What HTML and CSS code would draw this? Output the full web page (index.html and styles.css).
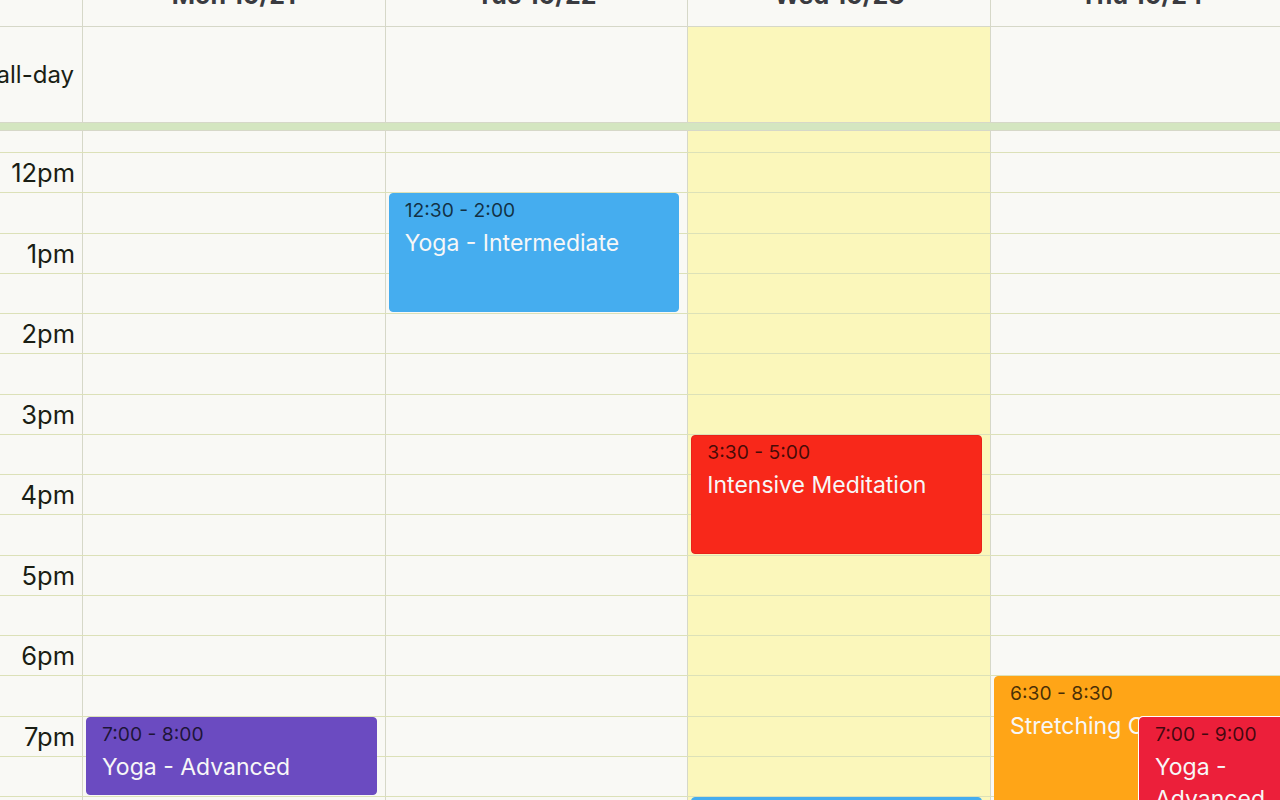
FILE: index.html
```html
<!DOCTYPE html>
<html lang="en">
<head>
<meta charset="utf-8">
<title>Week</title>
<link rel="stylesheet" href="styles.css">
</head>
<body>
<div class="cal">
  <div class="head grid">
    <div class="hc axis"></div>
    <div class="hc"><span>Mon 10/21</span></div>
    <div class="hc"><span>Tue 10/22</span></div>
    <div class="hc"><span>Wed 10/23</span></div>
    <div class="hc"><span>Thu 10/24</span></div>
    <div class="hc"><span>Fri 10/25</span></div>
  </div>
  <div class="allday grid">
    <div class="ac axis"><span>all-day</span></div>
    <div class="ac"></div>
    <div class="ac"></div>
    <div class="ac today"></div>
    <div class="ac"></div>
    <div class="ac"></div>
  </div>
  <div class="divider"></div>
  <div class="body">
    <div class="bgcols grid">
      <div class="bc axis"></div>
      <div class="bc"></div>
      <div class="bc"></div>
      <div class="bc today"></div>
      <div class="bc"></div>
      <div class="bc"></div>
    </div>
    <div class="slots">
      <div class="slot first"></div>
      <div class="slot"><span class="lbl">12pm</span></div>
      <div class="slot"></div>
      <div class="slot"><span class="lbl">1pm</span></div>
      <div class="slot"></div>
      <div class="slot"><span class="lbl">2pm</span></div>
      <div class="slot"></div>
      <div class="slot"><span class="lbl">3pm</span></div>
      <div class="slot"></div>
      <div class="slot"><span class="lbl">4pm</span></div>
      <div class="slot"></div>
      <div class="slot"><span class="lbl">5pm</span></div>
      <div class="slot"></div>
      <div class="slot"><span class="lbl">6pm</span></div>
      <div class="slot"></div>
      <div class="slot"><span class="lbl">7pm</span></div>
      <div class="slot"></div>
      <div class="slot"><span class="lbl">8pm</span></div>
      <div class="slot"></div>
    </div>
    <div class="evcols grid">
      <div class="evcol axis"></div>
      <div class="evcol">
        <div class="ev purple" style="top:585.5px;height:78.5px">
          <div class="ev-time">7:00 - 8:00</div>
          <div class="ev-title">Yoga - Advanced</div>
        </div>
      </div>
      <div class="evcol">
        <div class="ev blue" style="top:62.25px;height:118.75px">
          <div class="ev-time">12:30 - 2:00</div>
          <div class="ev-title">Yoga - Intermediate</div>
        </div>
      </div>
      <div class="evcol">
        <div class="ev red" style="top:303.75px;height:118.75px">
          <div class="ev-time">3:30 - 5:00</div>
          <div class="ev-title">Intensive Meditation</div>
        </div>
        <div class="ev blue" style="top:666px;height:78.5px">
          <div class="ev-time">8:00 - 9:00</div>
          <div class="ev-title">Yoga - Beginner</div>
        </div>
      </div>
      <div class="evcol">
        <div class="ev orange" style="top:545.25px;height:159px">
          <div class="ev-time">6:30 - 8:30</div>
          <div class="ev-title">Stretching Class</div>
        </div>
        <div class="ev crimson half" style="top:585.5px;height:159px">
          <div class="ev-time">7:00 - 9:00</div>
          <div class="ev-title">Yoga - Advanced</div>
        </div>
      </div>
      <div class="evcol"></div>
    </div>
  </div>
</div>
</body>
</html>
```

FILE: styles.css
```css
* { box-sizing: border-box; }

html, body {
  margin: 0;
  height: 100%;
}

body {
  font-family: Inter, "Noto Sans", sans-serif;
  background: #f9f9f5;
  color: #1a1e14;
  overflow: hidden;
}

.cal {
  height: 100vh;
  display: flex;
  flex-direction: column;
  overflow: hidden;
  font-size: 22px;
}

.grid {
  display: grid;
  grid-template-columns: 83px repeat(5, 302.67px);
}

/* header */
.head { flex: none; height: 27px; }
.hc {
  height: 27px;
  border-right: 1px solid #d6d8c8;
  border-bottom: 1px solid #d6d8c8;
  display: flex;
  justify-content: center;
  align-items: flex-start;
}
.hc span {
  font-weight: 700;
  font-size: 25px;
  line-height: 25px;
  margin-top: -17px;
  color: #3a3b40;
  white-space: nowrap;
}

/* all-day */
.allday { flex: none; height: 96px; }
.ac {
  height: 96px;
  border-right: 1px solid #d6d8c8;
  border-bottom: 1px solid #d6d8c8;
}
.ac.axis {
  display: flex;
  align-items: center;
  justify-content: flex-end;
  padding-right: 8px;
  font-size: 24px;
}
.ac.axis span { white-space: nowrap; }
.today { background: #fbf7bb; }

.divider {
  flex: none;
  height: 8px;
  background: #d4e6c0;
  border-bottom: 1px solid #d6d8c8;
}

/* body */
.body {
  flex: 1;
  display: grid;
  min-height: 0;
  overflow: hidden;
}
.bgcols, .slots, .evcols { grid-area: 1 / 1; }

.bc { border-right: 1px solid #d6d8c8; }

.slots { display: flex; flex-direction: column; }
.slot {
  flex: none;
  height: 40.25px;
  border-bottom: 1px solid #dce1b8;
  display: flex;
  align-items: center;
}
.slot.first { height: 22px; }
.lbl {
  width: 83px;
  text-align: right;
  padding-right: 8px;
  white-space: nowrap;
  font-size: 25.5px;
}

.evcol { position: relative; }

.ev {
  position: absolute;
  left: 3px;
  right: 9px;
  border: 1px solid transparent;
  border-radius: 4px;
  padding: 5px 15px 0;
  overflow: hidden;
}
.ev.half { left: 148px; box-shadow: 0 0 0 1px #ffffff; }
.ev-time {
  font-size: 19.3px;
  line-height: 23px;
  color: rgba(0, 0, 0, 0.72);
  white-space: nowrap;
}
.ev-title {
  margin-top: 5px;
  font-size: 23px;
  line-height: 32px;
  color: #f7f7f7;
}

.blue { background: #45adef; border-color: #45adef; }
.red { background: #f8281a; border-color: #e8231a; }
.purple { background: #6b4bc1; border-color: #6b4bc1; }
.orange { background: #ffa517; border-color: #ffa517; }
.crimson { background: #ec1f3a; border-color: #ec1f3a; }
```
